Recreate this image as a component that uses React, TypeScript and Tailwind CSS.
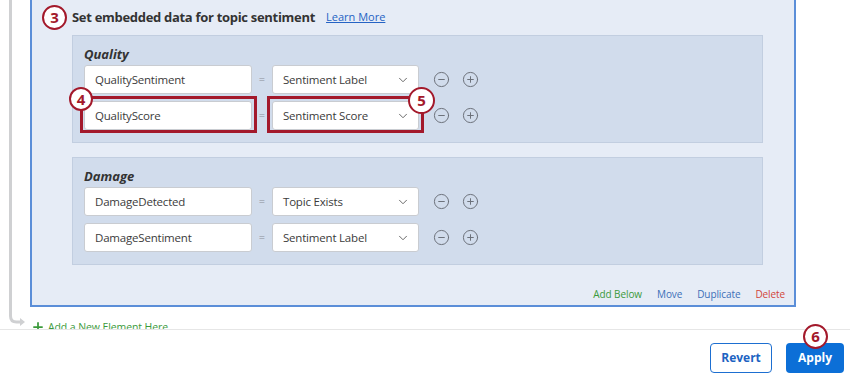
import { ChevronDown, CircleMinus, CirclePlus, Plus } from 'lucide-react';

type Row = { field: string; value: string; highlight?: boolean };

const groups: { name: string; rows: Row[] }[] = [
  {
    name: 'Quality',
    rows: [
      { field: 'QualitySentiment', value: 'Sentiment Label' },
      { field: 'QualityScore', value: 'Sentiment Score', highlight: true },
    ],
  },
  {
    name: 'Damage',
    rows: [
      { field: 'DamageDetected', value: 'Topic Exists' },
      { field: 'DamageSentiment', value: 'Sentiment Label' },
    ],
  },
];

function Step({ n, className = '' }: { n: number; className?: string }) {
  return (
    <span
      className={`flex items-center justify-center w-[24px] h-[24px] rounded-full bg-white border-2 border-[#a3192b] text-[#a3192b] text-[15px] font-bold leading-none ${className}`}
    >
      {n}
    </span>
  );
}

function MappingRow({ row, step }: { row: Row; step?: [number, number] }) {
  return (
    <div className="flex items-center h-[29px]">
      <div className="relative w-[168px] h-full">
        <div className="h-full bg-white border border-[#c9ccd1] rounded-[3px] flex items-center pl-[10px] text-[11.5px] tracking-[-0.2px] text-[#3b3b3b]">
          {row.field}
        </div>
        {row.highlight && (
          <>
            <div className="absolute -left-[4px] -right-[5px] -top-[5px] -bottom-[3px] border-[3px] border-[#a3192b]" />
            {step && <Step n={step[0]} className="absolute -left-[15px] -top-[14px] w-[22px] h-[22px]" />}
          </>
        )}
      </div>
      <span className="w-[20px] text-center text-[11px] text-[#8a8f98]">=</span>
      <div className="relative w-[147px] h-full">
        <div className="h-full bg-white border border-[#c9ccd1] rounded-[3px] flex items-center justify-between pl-[10px] pr-[8px] text-[11.5px] tracking-[-0.2px] text-[#3b3b3b]">
          <span>{row.value}</span>
          <ChevronDown className="w-[14px] h-[14px] text-[#555]" strokeWidth={1.5} />
        </div>
        {row.highlight && (
          <>
            <div className="absolute -left-[5px] -right-[5px] -top-[5px] -bottom-[3px] border-[3px] border-[#a3192b]" />
            {step && <Step n={step[1]} className="absolute -right-[16px] -top-[14px] w-[27px] h-[27px]" />}
          </>
        )}
      </div>
      <CircleMinus className="ml-[14px] w-[17px] h-[17px] text-[#6b7079]" strokeWidth={1.4} />
      <CirclePlus className="ml-[12px] w-[17px] h-[17px] text-[#6b7079]" strokeWidth={1.4} />
    </div>
  );
}

export default function App() {
  return (
    <div className="w-[850px] h-[380px] bg-white overflow-hidden" style={{ fontFamily: '"Open Sans", "Noto Sans", sans-serif' }}>
      <div className="relative h-[329px] overflow-hidden">
        <svg className="absolute left-0 top-0" width="30" height="329" viewBox="0 0 30 329">
          <path d="M10.5 0 V316 Q10.5 322 16.5 322 H22" fill="none" stroke="#cfd0d2" strokeWidth="3" />
          <path d="M20 318 L25 322 L20 326 Z" fill="#cfd0d2" />
        </svg>

        <div className="ml-[30px] w-[766px] bg-[#e6ecf6] border-2 border-t-0 border-[#5b8ed8]">
          <div className="flex items-center h-[30px] pt-[5px] pl-[10px]">
            <Step n={3} className="w-[25px] h-[25px]" />
            <span className="ml-[5px] text-[13px] tracking-[-0.3px] font-bold text-[#333]">Set embedded data for topic sentiment</span>
            <span className="ml-[11px] text-[11px] text-[#2563c4] underline">Learn More</span>
          </div>

          <div className="flex flex-col gap-[14px] mt-[5px] ml-[40px] w-[691px]">
            {groups.map((g) => (
              <div key={g.name} className="bg-[#d1dcec] border border-[#c2cee0] pt-[9px] pb-[12px] pl-[11px]">
                <div className="h-[18px] leading-[18px] text-[13px] font-bold italic text-[#333]">{g.name}</div>
                <div className="flex flex-col gap-[7px] mt-[2px]">
                  {g.rows.map((r) => (
                    <MappingRow key={r.field} row={r} step={r.highlight ? [4, 5] : undefined} />
                  ))}
                </div>
              </div>
            ))}
          </div>

          <div className="flex justify-end gap-[15px] mt-[21px] pr-[9px] pb-[4px] h-[19px] items-center text-[10px] tracking-[-0.1px] leading-[14px]">
            <span className="text-[#3b9a3b]">Add Below</span>
            <span className="text-[#3d6fb8]">Move</span>
            <span className="text-[#3d6fb8]">Duplicate</span>
            <span className="text-[#d2453a]">Delete</span>
          </div>
        </div>

        <div className="flex items-center gap-[3px] ml-[31px] mt-[12px] text-[10.5px] tracking-[-0.1px] leading-[16px] text-[#3b9a3b]">
          <Plus className="w-[14px] h-[14px]" strokeWidth={3} />
          <span>Add a New Element Here</span>
        </div>
      </div>

      <div className="relative h-[51px] border-t border-[#e6e6e6] flex justify-end items-start gap-[14px] pt-[13px] pr-[6px]">
        <button className="w-[62px] h-[30px] rounded-[4px] border-[1.5px] border-[#1d6fd1] bg-white text-[12px] font-bold text-[#1d63c2]">
          Revert
        </button>
        <div className="relative">
          <button className="w-[58px] h-[30px] rounded-[4px] bg-[#0c6fd7] text-[12px] font-bold text-white">Apply</button>
          <Step n={6} className="absolute left-[17px] -top-[19px] w-[25px] h-[25px]" />
        </div>
      </div>
    </div>
  );
}
